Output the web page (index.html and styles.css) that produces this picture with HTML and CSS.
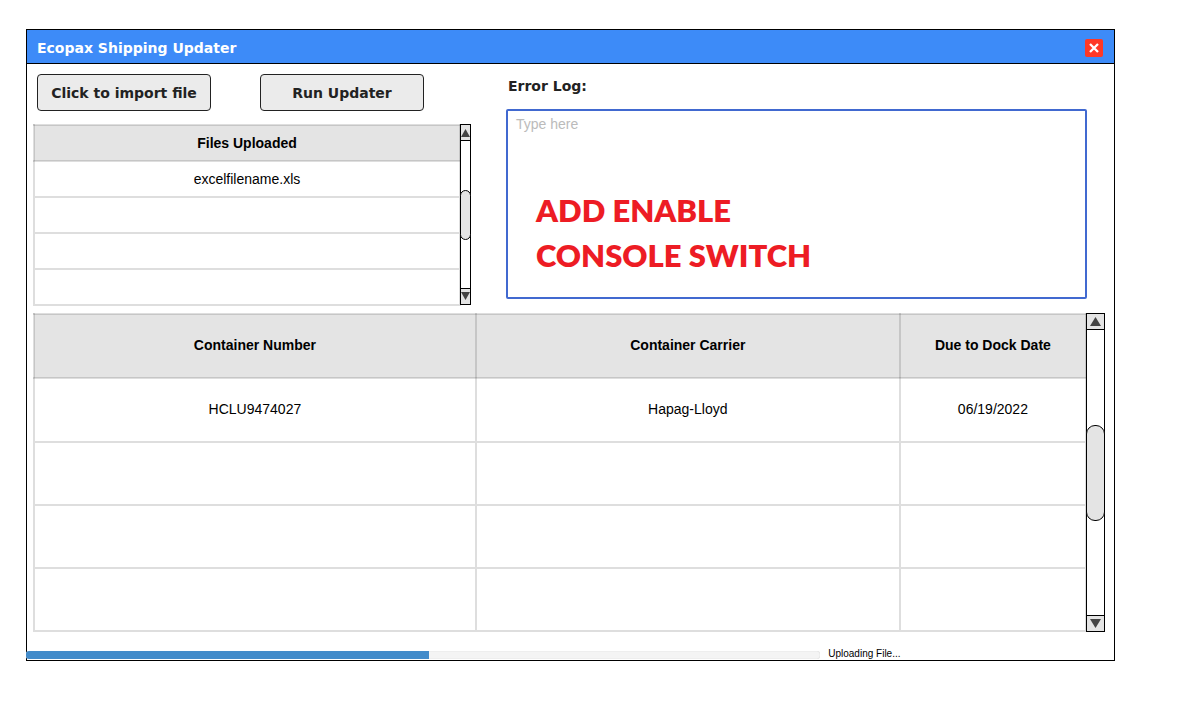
FILE: index.html
```html
<!DOCTYPE html>
<html lang="en">
<head>
<meta charset="utf-8">
<meta name="viewport" content="width=device-width, initial-scale=1">
<title>Ecopax Shipping Updater</title>
<link rel="stylesheet" href="styles.css">
</head>
<body>
<main class="window">
  <header class="titlebar">
    <h1 class="title">Ecopax Shipping Updater</h1>
    <button class="close" type="button" aria-label="Close">
      <svg viewBox="0 0 18 18" width="18" height="18" aria-hidden="true"><path d="M5 5l8 8M13 5l-8 8" stroke="#fff" stroke-width="2.3" fill="none"/></svg>
    </button>
  </header>

  <section class="top">
    <div class="files">
      <div class="actions">
        <button class="btn btn-import" type="button">Click to import file</button>
        <button class="btn btn-run" type="button">Run Updater</button>
      </div>
      <div class="scroll-area">
        <table class="grid grid-files">
          <thead><tr><th scope="col">Files Uploaded</th></tr></thead>
          <tbody>
            <tr><td>excelfilename.xls</td></tr>
            <tr><td></td></tr>
            <tr><td></td></tr>
            <tr><td></td></tr>
          </tbody>
        </table>
        <div class="scrollbar scrollbar-small">
          <button class="arrow" type="button" aria-label="Scroll files up"><svg viewBox="0 0 10 10" aria-hidden="true"><path d="M5 1L10 10H0z" fill="#444"/></svg></button>
          <div class="track"><div class="thumb"></div></div>
          <button class="arrow" type="button" aria-label="Scroll files down"><svg viewBox="0 0 10 10" aria-hidden="true"><path d="M5 9L10 0H0z" fill="#444"/></svg></button>
        </div>
      </div>
    </div>

    <div class="log">
      <label class="log-label" for="log">Error Log:</label>
      <div class="log-box">
        <textarea class="log-input" id="log" placeholder="Type here"></textarea>
        <p class="note">ADD ENABLE<br>CONSOLE SWITCH</p>
      </div>
    </div>
  </section>

  <section class="scroll-area containers">
    <table class="grid grid-containers">
      <colgroup><col class="col-number"><col class="col-carrier"><col></colgroup>
      <thead>
        <tr class="tall"><th scope="col">Container Number</th><th scope="col">Container Carrier</th><th scope="col">Due to Dock Date</th></tr>
      </thead>
      <tbody>
        <tr class="tall"><td>HCLU9474027</td><td>Hapag-Lloyd</td><td>06/19/2022</td></tr>
        <tr><td></td><td></td><td></td></tr>
        <tr><td></td><td></td><td></td></tr>
        <tr><td></td><td></td><td></td></tr>
      </tbody>
    </table>
    <div class="scrollbar scrollbar-large">
      <button class="arrow" type="button" aria-label="Scroll containers up"><svg viewBox="0 0 10 10" aria-hidden="true"><path d="M5 1L10 9H0z" fill="#444"/></svg></button>
      <div class="track"><div class="thumb"></div></div>
      <button class="arrow" type="button" aria-label="Scroll containers down"><svg viewBox="0 0 10 10" aria-hidden="true"><path d="M5 9L10 1H0z" fill="#444"/></svg></button>
    </div>
  </section>

  <footer class="status">
    <div class="progress" role="progressbar" aria-labelledby="status-text"><div class="progress-fill" style="width: 50.7%"></div></div>
    <span class="status-text" id="status-text">Uploading File...</span>
  </footer>
</main>
</body>
</html>
```
FILE: styles.css
```css
* {
  box-sizing: border-box;
}

body {
  margin: 29px 63px 29px 26px;
  background: #fff;
  color: #000;
  font-family: "Liberation Sans", Arial, sans-serif;
  font-size: 14px;
}

button {
  margin: 0;
  padding: 0;
}

.window {
  border: 1px solid #000;
}

.titlebar {
  display: flex;
  align-items: center;
  justify-content: space-between;
  height: 34px;
  padding: 2px 11px 0 10px;
  border-bottom: 1px solid #000;
  background: #3d8bf8;
}

.title,
.btn,
.log-label {
  font-family: "DejaVu Sans", Verdana, sans-serif;
  font-size: 14px;
  font-weight: 700;
  line-height: 20px;
}

.title {
  margin: 0;
  color: #fff;
}

.close {
  width: 18px;
  height: 18px;
  border: 0;
  border-radius: 2px;
  background: #ff3826;
}

.close svg {
  display: block;
}

.top {
  display: grid;
  grid-template-columns: 438fr 581fr;
  column-gap: 35px;
  padding: 10px 27px 0 6px;
}

.actions {
  display: flex;
  gap: 49px;
  margin-bottom: 13px;
  padding-left: 4px;
}

.btn {
  height: 37px;
  border: 1px solid #222;
  border-radius: 4px;
  background: #ebebeb;
  color: #222;
}

.btn-import {
  width: 174px;
}

.btn-run {
  width: 164px;
}

.scroll-area {
  display: flex;
}

.grid {
  flex: 1;
  border-collapse: collapse;
  table-layout: fixed;
}

.grid th,
.grid td {
  padding: 0;
  border: 2px solid #dedede;
  text-align: center;
}

.grid th {
  border-color: rgba(0, 0, 0, 0.13);
  background: #e4e4e4;
}

.grid-files tr {
  height: 36px;
}

.grid-containers tr {
  height: 63px;
}

.grid-containers .tall {
  height: 64px;
}

.grid-containers th,
.grid-containers td {
  padding-bottom: 2px;
}

.col-number {
  width: 42%;
}

.col-carrier {
  width: 40.3%;
}

.scrollbar {
  display: flex;
  flex-direction: column;
  position: relative;
  margin-left: -1px;
  border: 1px solid #000;
  background: #fff;
}

.scrollbar-small {
  width: 11px;
  margin-bottom: 1px;
}

.scrollbar-large {
  width: 19px;
}

.arrow {
  display: grid;
  place-items: center;
  height: 15px;
  border: 0;
  background: #e4e4e4;
}

.arrow svg {
  display: block;
  width: 9px;
  height: 9px;
}

.scrollbar-large .arrow svg {
  width: 11px;
  height: 11px;
}

.track {
  display: flex;
  flex: 1;
  flex-direction: column;
  border: solid #000;
  border-width: 1px 0;
}

.thumb {
  margin: 0 -1px;
  border: 1px solid #000;
  border-radius: 9px;
  background: #e4e4e4;
}

.scrollbar-small .thumb {
  height: 50px;
  margin-top: 49px;
}

.scrollbar-large .thumb {
  height: 96px;
  margin-top: 95px;
}

.log {
  display: flex;
  flex-direction: column;
  padding: 2px 0 7px;
}

.log-label {
  margin-bottom: 13px;
  padding-left: 2px;
  color: #222;
}

.log-box {
  position: relative;
  display: flex;
  flex: 1;
}

.log-input {
  flex: 1;
  padding: 5px 8px;
  border: 2px solid #4169d0;
  border-radius: 2px;
  outline: 0;
  background: #fff;
  font: 14px/16px "Liberation Sans", Arial, sans-serif;
  resize: none;
}

.log-input::placeholder {
  color: #bbb;
}

.note {
  position: absolute;
  top: 79px;
  left: 30px;
  margin: 0;
  color: #ed1c24;
  font-family: Lato, sans-serif;
  font-size: 31px;
  font-weight: 800;
  line-height: 45px;
  pointer-events: none;
}

.containers {
  padding: 7px 9px 0 6px;
}

.status {
  display: flex;
  align-items: center;
  gap: 8px;
  margin: 16px 0 0 -1px;
  height: 12px;
}

.progress {
  width: 73%;
  height: 8px;
  margin-top: 2px;
  border-radius: 3px;
  background: #f4f4f4;
  box-shadow: inset 0 0 1px #bbb;
  overflow: hidden;
}

.progress-fill {
  height: 8px;
  background: #428bca;
}

.status-text {
  font-size: 10px;
  line-height: 12px;
}
```
